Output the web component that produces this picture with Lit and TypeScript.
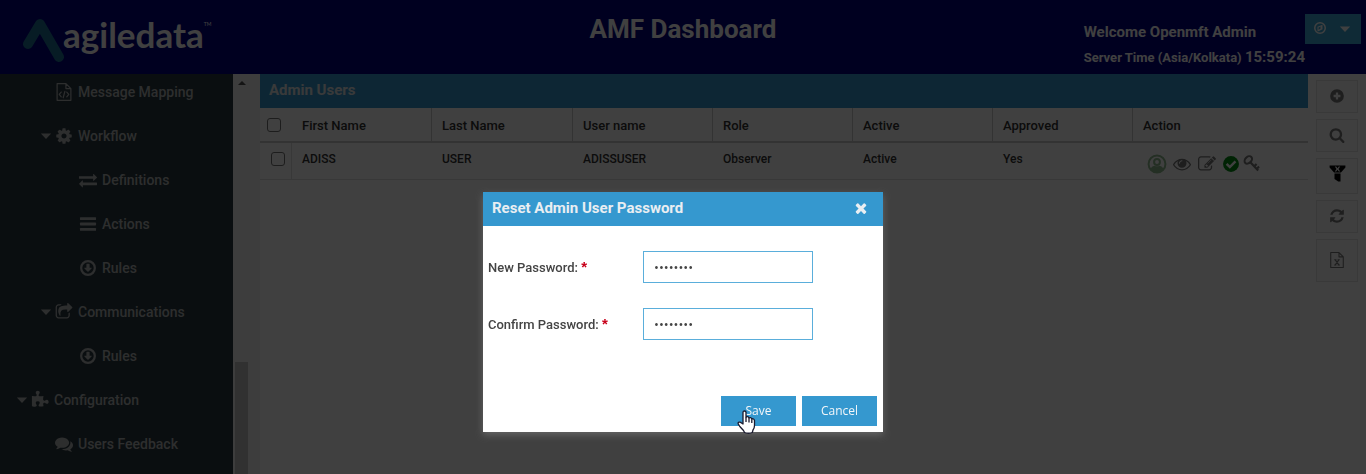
import { LitElement, html, css, svg, nothing } from "lit";
import { customElement, property, state } from "lit/decorators.js";

const glyphs: Record<string, unknown> = {
  fileCode: svg`<path fill="none" stroke="currentColor" stroke-width="120" stroke-linejoin="round" d="M1088 64H210v1664h1372V558zM1088 64v494h494"/><path fill="none" stroke="currentColor" stroke-width="120" stroke-linecap="round" stroke-linejoin="round" d="M620 900l-200 240 200 240M1172 900l200 240-200 240M985 830l-170 640"/>`,
  cog: svg`<path d="M1152 896q0-106-75-181t-181-75-181 75-75 181 75 181 181 75 181-75 75-181zm512-109v222q0 12-8 23t-20 13l-185 28q-19 54-39 91 35 50 107 138 10 12 10 25t-9 23q-27 37-99 108t-94 71q-12 0-26-9l-138-108q-44 23-91 38-16 136-29 186-7 28-36 28h-222q-14 0-24.500-8.500t-11.500-21.500l-28-184q-49-16-90-37l-141 107q-10 9-25 9-14 0-25-11-126-114-165-168-7-10-7-23 0-12 8-23 15-21 51-66.500t54-70.500q-27-50-41-99l-183-27q-13-2-21-12.500t-8-23.500v-222q0-12 8-23t19-13l186-28q14-46 39-92-40-57-107-138-10-12-10-24 0-10 9-23 26-36 98.500-107.500t94.500-71.500q13 0 26 10l138 107q44-23 91-38 16-136 29-186 7-28 36-28h222q14 0 24.500 8.500t11.500 21.500l28 184q49 16 90 37l142-107q9-9 24-9 13 0 25 10 129 119 165 170 7 8 7 22 0 12-8 23-15 21-51 66.500t-54 70.500q26 50 41 98l183 28q13 2 21 12.500t8 23.500z"/>`,
  exchange: svg`<path d="M1792 1184v192q0 13-9.500 22.500t-22.500 9.500h-1376v192q0 13-9.500 22.500t-22.500 9.500q-12 0-24-10l-319-320q-9-9-9-22 0-14 9-23l320-320q9-9 23-9 13 0 22.500 9.500t9.500 22.500v192h1376q13 0 22.500 9.500t9.500 22.500zm0-544q0 14-9 23l-320 320q-9 9-23 9-13 0-22.500-9.500t-9.500-22.500v-192h-1376q-13 0-22.500-9.500t-9.500-22.500v-192q0-13 9.500-22.500t22.500-9.500h1376v-192q0-14 9-23t23-9q12 0 24 10l319 319q9 9 9 23z"/>`,
  bars: svg`<rect x="96" y="220" width="1600" height="290" rx="60"/><rect x="96" y="751" width="1600" height="290" rx="60"/><rect x="96" y="1282" width="1600" height="290" rx="60"/>`,
  circleDown: svg`<circle cx="896" cy="896" r="680" fill="none" stroke="currentColor" stroke-width="224"/><path d="M770 480h252q32 0 32 32v352h192q40 0 24 50l-342 350q-32 26-64 0L522 914q-16-50 24-50h192V512q0-32 32-32z"/>`,
  share: svg`<path d="M1472 989v259q0 119-84.500 203.500t-203.500 84.500h-832q-119 0-203.500-84.500t-84.500-203.500v-832q0-119 84.500-203.500t203.500-84.500h255q13 0 22.500 9.500t9.500 22.500q0 27-26 32-77 26-133 60-10 4-16 4h-112q-66 0-113 47t-47 113v832q0 66 47 113t113 47h832q66 0 113-47t47-113v-214q0-19 18-29 28-13 54-37 16-16 35-8 21 9 21 29zm237-496l-384 384q-18 19-45 19-12 0-25-5-39-17-39-59v-192h-160q-323 0-438 131-119 137-74 473 3 23-20 34-8 2-12 2-16 0-26-13-10-14-21-31t-39.500-68.500-49.500-99.500-38.500-114-17.500-122q0-49 3.500-91t14-90 28-88 47-81.500 68.500-74 94.500-61.500 124.500-48.500 159.500-30.500 196.500-11h160v-192q0-42 39-59 13-5 25-5 26 0 45 19l384 384q19 19 19 45t-19 45z"/>`,
  puzzle: svg`<path d="M1755 1083q0 81-44.500 135t-123.500 54q-41 0-77.500-17.500t-59-38-56.500-38-71-17.500q-110 0-110 124 0 39 16 115t15 115v5q-22 0-33 1-34 3-97.500 11.500t-115.500 13.500-98 5q-61 0-103-26.500t-42-83.500q0-37 17.500-71t38-56.500 38-59 17.500-77.500q0-79-54-123.500t-135-44.500q-84 0-143 45.500t-59 127.500q0 43 15 83t33.500 64.500 33.500 53 15 50.500q0 45-46 89-37 35-117 35-95 0-245-24-9-2-27.500-4t-27.500-4l-13-2q-1 0-3-1-2 0-2-1v-1024q2 1 17.500 3.500t34 5 21.500 3.500q150 24 245 24 80 0 117-35 46-44 46-89 0-22-15-50.500t-33.500-53-33.500-64.500-15-83q0-82 59-127.500t144-45.500q80 0 134 44.500t54 123.500q0 41-17.500 77.500t-38 59-38 56.500-17.500 71q0 57 42 83.500t103 26.500q64 0 180-15t163-17v2q-1 2-3.500 17.500t-5 34-3.500 21.500q-24 150-24 245 0 80 35 117 44 46 89 46 22 0 50.500-15t53-33.500 64.500-33.500 83-15q82 0 127.500 59t45.500 143z"/>`,
  comments: svg`<path d="M1408 768q0 139-94 257t-256.500 186.500-353.500 68.500q-86 0-176-16-124 88-278 128-36 9-86 16h-3q-11 0-20.500-8t-11.500-21q-1-3-1-6.500t.5-6.500 2-6l2.500-5 3.500-5.500 4-5 4.500-5 4-4.500q5-6 23-25t26-29.500 22.500-29 25-38.500 20.500-44q-124-72-195-177t-71-224q0-139 94-257t256.500-186.500 353.500-68.500 353.500 68.500 256.500 186.500 94 257zm384 256q0 120-71 224.500t-195 176.500q10 24 20.500 44t25 38.500 22.500 29 26 29.500 23 25q1 1 4 4.500t4.500 5 4 5 3.500 5.500l2.500 5 2 6 .5 6.500-1 6.500q-3 14-13 22t-22 7q-50-7-86-16-154-40-278-128-90 16-176 16-271 0-472-132 58 4 88 4 161 0 309-45t264-129q125-92 192-212t67-254q0-77-23-152 129 71 204 178t75 230z"/>`,
  caret: svg`<path d="M128 512h1536L896 1344z"/>`,
  compass: svg`<circle cx="896" cy="896" r="672" fill="none" stroke="currentColor" stroke-width="192"/><path fill-rule="evenodd" d="M1216 480v580l-512 256-128 0V740zM704 820v300l256-128V692z"/>`,
  plusCircle: svg`<path fill-rule="evenodd" d="M896 128a768 768 0 1 1 0 1536 768 768 0 0 1 0-1536zM768 512v256H512v256h256v256h256v-256h256V768h-256V512z"/>`,
  search: svg`<path d="M1216 832q0-185-131.500-316.500t-316.500-131.500-316.500 131.500-131.500 316.500 131.500 316.500 316.500 131.500 316.500-131.500 131.500-316.500zm512 832q0 52-38 90t-90 38q-54 0-90-38l-343-342q-179 124-399 124-143 0-273.500-55.500t-225-150-150-225-55.500-273.500 55.500-273.500 150-225 225-150 273.500-55.500 273.500 55.500 225 150 150 225 55.500 273.500q0 220-124 399l343 343q37 37 37 90z"/>`,
  filter: svg`<path fill-rule="evenodd" d="M64 64h1664v200L1260 800H532L64 264zM610 150l180 270-180 270h150l136-180 136 180h150L1002 420l180-270h-150L896 330 760 150z"/><path d="M580 890h632v838h-240l-392-260z"/>`,
  refresh: svg`<path d="M1639 1056q0 5-1 7-64 268-268 434.500t-478 166.500q-146 0-282.500-55t-243.500-157l-129 129q-19 19-45 19t-45-19-19-45v-448q0-26 19-45t45-19h448q26 0 45 19t19 45-19 45l-137 137q71 66 161 102t187 36q134 0 250-65t186-179q11-17 53-117 8-23 30-23h192q13 0 22.500 9.500t9.500 22.500zm25-800v448q0 26-19 45t-45 19h-448q-26 0-45-19t-19-45 19-45l138-138q-148-137-349-137-134 0-250 65t-186 179q-11 17-53 117-8 23-30 23h-199q-13 0-22.500-9.500t-9.500-22.500v-7q65-268 270-434.500t480-166.500q146 0 284 55.500t245 156.500l130-129q19-19 45-19t45 19 19 45z"/>`,
  fileExcel: svg`<path fill="none" stroke="currentColor" stroke-width="120" stroke-linejoin="round" d="M1120 64H192v1664h1408V544zM1120 64v480h480"/><path fill="none" stroke="currentColor" stroke-width="120" d="M700 880l400 560M1100 880l-400 560M590 860h240M970 860h230M580 1450h240M980 1450h240"/>`,
  user: svg`<circle cx="896" cy="896" r="840" fill="none" stroke="currentColor" stroke-width="200"/><circle cx="896" cy="700" r="290" fill="none" stroke="currentColor" stroke-width="200"/><path d="M250 1450q60-330 400-390 246 110 492 0 340 60 400 390-260 290-646 290t-646-290z"/>`,
  eye: svg`<path d="M1664 960q-152-236-381-353 61 104 61 225 0 185-131.500 316.500t-316.500 131.500-316.500-131.500-131.500-316.500q0-121 61-225-229 117-381 353 133 205 333.500 326.500t434.500 121.500 434.500-121.500 333.500-326.500zm-720-384q0-20-14-34t-34-14q-125 0-214.500 89.500t-89.500 214.500q0 20 14 34t34 14 34-14 14-34q0-86 61-147t147-61q20 0 34-14t14-34zm848 384q0 34-20 69-140 230-376.500 368.500t-499.500 138.500-499.500-139-376.500-368q-20-35-20-69t20-69q140-229 376.500-368t499.500-139 499.500 139 376.500 368q20 35 20 69z"/>`,
  edit: svg`<path d="M888 1184l116-116-152-152-116 116v56h96v96h56zm440-720q-16-16-33 1l-350 350q-17 17-1 33t33-1l350-350q17-17 1-33zm80 594v190q0 119-84.500 203.500t-203.500 84.500h-832q-119 0-203.500-84.500t-84.500-203.500v-832q0-119 84.500-203.500t203.500-84.500h832q63 0 117 25 15 7 18 23 3 17-9 29l-49 49q-14 14-32 8-23-6-45-6h-832q-66 0-113 47t-47 113v832q0 66 47 113t113 47h832q66 0 113-47t47-113v-126q0-13 9-22l64-64q15-15 35-7t20 29zm-96-738l288 288-672 672h-288v-288zm444 132l-92 92-288-288 92-92q28-28 68-28t68 28l152 152q28 28 28 68t-28 68z"/>`,
  check: svg`<circle cx="896" cy="896" r="790"/><path fill="none" stroke="#fff" stroke-width="250" d="M460 880l320 320 560-560"/>`,
  key: svg`<ellipse cx="560" cy="520" rx="450" ry="320" transform="rotate(-45 560 520)" fill="none" stroke="currentColor" stroke-width="220"/><path fill="none" stroke="currentColor" stroke-width="230" d="M800 800l800 840M1180 1200l250-250M1440 1470l250-250"/>`,
  times: svg`<path d="M1490 1322q0 40-28 68l-136 136q-28 28-68 28t-68-28l-294-294-294 294q-28 28-68 28t-68-28l-136-136q-28-28-28-68t28-68l294-294-294-294q-28-28-28-68t28-68l136-136q28-28 68-28t68 28l294 294 294-294q28-28 68-28t68 28l136 136q28 28 28 68t-28 68l-294 294 294 294q28 28 28 68z"/>`,
};

const icon = (name: string, size: number) =>
  html`<svg class="icon" width=${size} height=${size} viewBox="0 0 1792 1792" fill="currentColor" aria-hidden="true">${glyphs[name]}</svg>`;

const shared = css`
  * { box-sizing: border-box; }
  .icon { display: block; flex: none; overflow: visible; }
  button { font: inherit; color: inherit; border: 0; padding: 0; background: none; cursor: pointer; }
`;

@customElement("app-header")
class AppHeader extends LitElement {
  static styles = [shared, css`
    :host {
      display: grid;
      grid-template-columns: 1fr auto 1fr;
      height: 74px;
      background: #000080;
      color: #fff;
    }
    .logo { display: flex; padding-left: 22px; align-items: flex-start; }
    .mark { margin-top: 18px; margin-right: -2px; color: #1d6f92; flex: none; }
    .word { margin-top: 12px; font: 700 35px/44px Lato, sans-serif; color: #fff; }
    .tm { margin-top: 20px; font: 400 5px/8px Lato, sans-serif; }
    .title { margin: 0; padding-top: 14px; font-size: 26px; line-height: 30px; font-weight: 700; }
    .right { display: flex; justify-content: flex-end; padding: 14px 5px 0 0; align-items: flex-start; }
    .who { padding-top: 8px; font-size: 15px; line-height: 20px; font-weight: 700; }
    .time { margin-top: 5px; font-size: 13px; }
    .clock { font-size: 15px; }
    .menu {
      display: flex;
      align-items: center;
      justify-content: space-between;
      width: 56px;
      height: 30px;
      padding: 0 10px 0 8px;
      background: #3ca8d8;
    }
    .menu .icon:first-child { margin-bottom: 3px; }
  `];

  render() {
    return html`
      <div class="logo">
        <svg class="mark" width="43" height="45" viewBox="0 0 43 45" fill="none" stroke="currentColor" stroke-width="10" stroke-linecap="round" stroke-linejoin="round" aria-hidden="true">
          <path d="M6 26L18 6l19 33" />
        </svg>
        <span class="word">agiledata</span><span class="tm">TM</span>
      </div>
      <h1 class="title">AMF Dashboard</h1>
      <div class="right">
        <div class="who">
          <div>Welcome Openmft Admin</div>
          <div class="time">Server Time (Asia/Kolkata) <span class="clock">15:59:24</span></div>
        </div>
        <button class="menu" aria-label="Account menu">${icon("compass", 14)}${icon("caret", 12)}</button>
      </div>
    `;
  }
}

interface NavItem { label: string; icon: string; level: number; open?: boolean; }

const navItems: NavItem[] = [
  { label: "Message Mapping", icon: "fileCode", level: 1 },
  { label: "Workflow", icon: "cog", level: 1, open: true },
  { label: "Definitions", icon: "exchange", level: 2 },
  { label: "Actions", icon: "bars", level: 2 },
  { label: "Rules", icon: "circleDown", level: 2 },
  { label: "Communications", icon: "share", level: 1, open: true },
  { label: "Rules", icon: "circleDown", level: 2 },
  { label: "Configuration", icon: "puzzle", level: 0, open: true },
  { label: "Users Feedback", icon: "comments", level: 1 },
];

@customElement("app-sidebar")
class AppSidebar extends LitElement {
  static styles = [shared, css`
    :host { display: flex; overflow: hidden; background: #fff; }
    .nav { width: 233px; background: #2a3940; color: #b4b6b8; overflow: hidden; }
    .list { margin: -4px 0 0; padding: 0; list-style: none; }
    .item {
      display: flex;
      align-items: center;
      height: 44px;
      color: inherit;
      text-decoration: none;
      font-size: 14px;
      font-weight: 500;
    }
    .level-0 { padding-left: 15px; }
    .level-1 { padding-left: 39px; }
    .level-2 { padding-left: 63px; }
    .toggle { display: flex; justify-content: center; width: 14px; }
    .glyph { display: flex; justify-content: center; width: 22px; margin-right: 3px; }
    .track { width: 17px; padding: 0 2px; background: #f1f1f1; display: flex; flex-direction: column; align-items: center; }
    .up { margin-top: 7px; border: 4px solid transparent; border-top: 0; border-bottom-color: #505050; }
    .thumb { width: 13px; flex: 1; margin-top: 277px; background: #c1c1c1; }
  `];

  render() {
    return html`
      <nav class="nav">
        <ul class="list">
          ${navItems.map((n) => html`
            <li><a class="item level-${n.level}" href="#">
              <span class="toggle">${n.open ? icon("caret", 12) : nothing}</span>
              <span class="glyph">${icon(n.icon, 18)}</span>
              <span>${n.label}</span>
            </a></li>`)}
        </ul>
      </nav>
      <div class="track"><span class="up"></span><span class="thumb"></span></div>
    `;
  }
}

@customElement("user-grid")
class UserGrid extends LitElement {
  static styles = [shared, css`
    :host { display: block; background: #fff; color: #333; }
    .title {
      margin: 0;
      height: 34px;
      padding: 0 9px 2px;
      background: #3598cf;
      color: #e4e6e8;
      font-size: 15px;
      line-height: 32px;
      font-weight: 700;
    }
    .grid { width: 100%; border-collapse: separate; border-spacing: 0; table-layout: fixed; }
    .grid th { height: 35px; padding: 2px 10px 0; border-bottom: 2px solid #ccc; border-right: 1px solid #ccc; text-align: left; font-size: 13px; font-weight: 500; }
    .grid th.pick { padding: 0 0 0 7px; border-right: 0; }
    .grid th:last-child { border-right: 0; }
    .grid td { height: 37px; padding: 0 10px 5px; border-bottom: 1px solid #dedede; font-size: 12px; font-weight: 500; }
    .grid td.pick { padding: 0 0 4px 11px; border-right: 1px solid #dedede; }
    .grid td.tools { padding: 5px 10px 0 15px; }
    .c-pick { width: 32px; }
    .c-text { width: 140px; }
    .c-wide { width: 141px; }
    .box { appearance: none; display: block; width: 14px; height: 14px; margin: 0; border: 1px solid #767676; border-radius: 3px; }
    .actions { display: flex; align-items: center; gap: 7px; color: #777; }
    .actions button { display: block; }
    .actions .person { color: #8fbc8f; }
    .actions .ok { margin-left: -1px; color: #008a12; }
    .actions .last { margin-left: -4px; }
  `];

  render() {
    return html`
      <h2 class="title">Admin Users</h2>
      <table class="grid">
        <colgroup>
          <col class="c-pick" />
          <col class="c-text" />
          <col class="c-wide" />
          ${[0, 1, 2, 3].map(() => html`<col class="c-text" />`)}
          <col />
        </colgroup>
        <thead>
          <tr>
            <th class="pick"><input class="box" type="checkbox" aria-label="Select all users" /></th>
            ${["First Name", "Last Name", "User name", "Role", "Active", "Approved", "Action"].map((t) => html`<th>${t}</th>`)}
          </tr>
        </thead>
        <tbody>
          <tr>
            <td class="pick"><input class="box" type="checkbox" aria-label="Select ADISS USER" /></td>
            ${["ADISS", "USER", "ADISSUSER", "Observer", "Active", "Yes"].map((t) => html`<td>${t}</td>`)}
            <td class="tools">
              <div class="actions">
                <button class="person" aria-label="Profile">${icon("user", 18)}</button>
                <button aria-label="View">${icon("eye", 18)}</button>
                <button aria-label="Edit">${icon("edit", 18)}</button>
                <button class="ok" aria-label="Approve">${icon("check", 18)}</button>
                <button class="last" aria-label="Reset password">${icon("key", 17)}</button>
              </div>
            </td>
          </tr>
        </tbody>
      </table>
    `;
  }
}

@customElement("side-tools")
class SideTools extends LitElement {
  static styles = [shared, css`
    :host { display: flex; flex-direction: column; gap: 6px; padding: 6px 8px; background: #fff; color: #777; }
    .tool { display: flex; align-items: center; justify-content: center; height: 33px; padding-bottom: 1px; background: #f9f9f9; border: 1px solid #e4e4e4; }
    .mid { height: 36px; color: #000; padding-bottom: 5px; }
    .tall { height: 43px; }
  `];

  render() {
    return html`
      <button class="tool" aria-label="Add">${icon("plusCircle", 16)}</button>
      <button class="tool" aria-label="Search">${icon("search", 16)}</button>
      <button class="tool mid" aria-label="Clear filter">${icon("filter", 17)}</button>
      <button class="tool" aria-label="Refresh">${icon("refresh", 16)}</button>
      <button class="tool tall" aria-label="Export to Excel">${icon("fileExcel", 16)}</button>
    `;
  }
}

@customElement("password-dialog")
class PasswordDialog extends LitElement {
  @property() heading = "";

  static styles = [shared, css`
    :host { display: block; position: relative; width: 400px; background: #fff; color: #444; box-shadow: 0 3px 7px #666; }
    .head {
      display: flex;
      align-items: center;
      justify-content: space-between;
      height: 34px;
      padding: 0 14px 2px 9px;
      background: #3598cf;
      color: #e9eef2;
    }
    .heading { margin: 0; font-size: 15px; line-height: 20px; font-weight: 700; }
    .form { display: flex; flex-direction: column; gap: 25px; padding: 25px 5px 56px; }
    .row { display: grid; grid-template-columns: 155px 170px; align-items: center; font-size: 13px; font-weight: 500; }
    .req { color: #c8001a; font: 700 15px/15px "Liberation Sans", sans-serif; }
    .field { height: 32px; width: 100%; padding: 0 10px; border: 1px solid #5aaedb; outline: 0; border-radius: 0; background: #fff; color: #444; font: 400 13px "Open Sans", sans-serif; }
    .foot { display: flex; justify-content: flex-end; gap: 6px; padding: 0 6px 6px; }
    .btn { width: 75px; height: 30px; padding-bottom: 1px; background: #3598cf; color: #f2f6f9; font: 400 12px "Open Sans", sans-serif; }
    .cursor { position: absolute; left: 254px; top: 218px; }
  `];

  render() {
    return html`
      <div class="head">
        <h2 class="heading">${this.heading}</h2>
        <button aria-label="Close">${icon("times", 16)}</button>
      </div>
      <form class="form" id="reset">
        <div class="row">
          <label for="pw">New Password: <span class="req">*</span></label>
          <input class="field" id="pw" type="password" value="password" autocomplete="new-password" />
        </div>
        <div class="row">
          <label for="pw2">Confirm Password: <span class="req">*</span></label>
          <input class="field" id="pw2" type="password" value="password" autocomplete="new-password" />
        </div>
      </form>
      <div class="foot">
        <button class="btn" type="button">Save</button>
        <button class="btn" type="button">Cancel</button>
      </div>
      <svg class="cursor" width="19" height="24" viewBox="0 0 19 24" fill="#fff" stroke="#1a1a2e" stroke-width="1.300" stroke-linejoin="round" aria-hidden="true">
        <path d="M6 14V2.600Q6 1 7.500 1T9 2.600V7.500Q9.300 6.500 10.500 6.600T12 8.200Q12.400 7.400 13.500 7.600T14.800 9.200Q15.300 8.600 16.200 8.800T17.500 10.500V15.500Q17.500 18 16 20L15.300 22.500Q11.500 24 7.500 22.500L6.500 20.500L2.800 16.500L1.200 13.800Q.8 12.300 2.200 12.100T4.500 13z" />
        <path fill="none" d="M9 7.500V12M12 8.200V12.500M14.800 9.200V13" />
      </svg>
    `;
  }
}

@customElement("app-root")
class AppRoot extends LitElement {
  @state() private dialogOpen = true;

  static styles = [shared, css`
    :host { display: flex; flex-direction: column; height: 100vh; overflow: hidden; background: #fff; font-family: Roboto, sans-serif; }
    .body { display: grid; grid-template-columns: auto minmax(0, 1fr) 58px; flex: 1; min-height: 0; background: #f4f4f4; }
    .content { margin-left: 10px; }
    .veil { position: fixed; inset: 0; display: flex; justify-content: center; align-items: flex-start; padding-top: 192px; background: rgba(0, 0, 0, 0.75); }
  `];

  render() {
    return html`
      <app-header></app-header>
      <div class="body">
        <app-sidebar></app-sidebar>
        <user-grid class="content"></user-grid>
        <side-tools></side-tools>
      </div>
      ${this.dialogOpen
        ? html`<div class="veil"><password-dialog role="dialog" aria-modal="true" heading="Reset Admin User Password"></password-dialog></div>`
        : nothing}
    `;
  }
}
